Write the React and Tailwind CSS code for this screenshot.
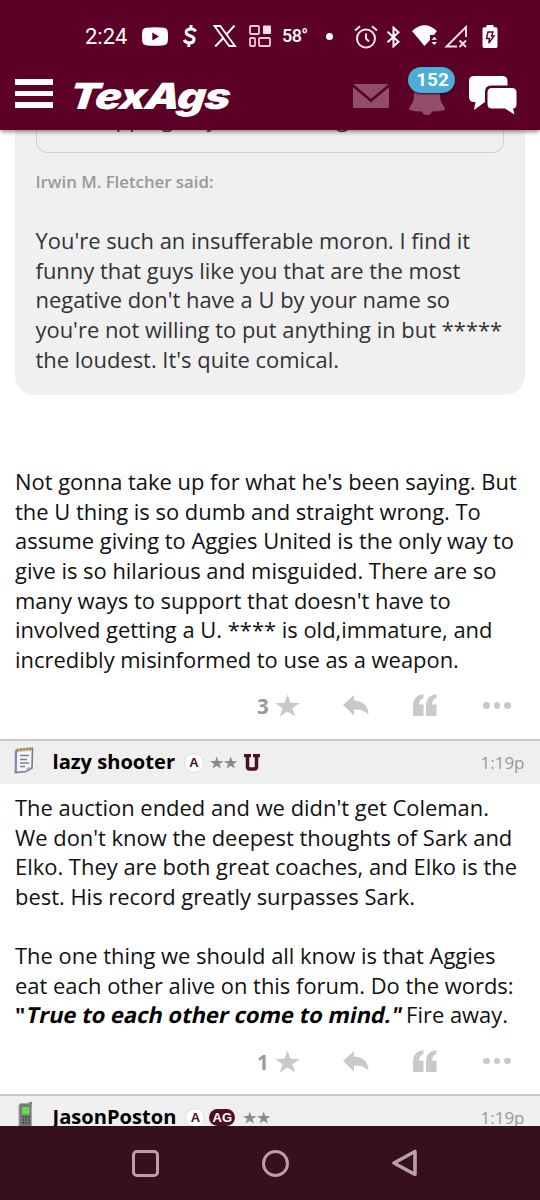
import React from "react";

const STAR =
  "M12.5 0 L15.4 8.2 L25 8.5 L17.4 13.7 L20.2 22 L12.5 17 L4.8 22 L7.6 13.7 L0 8.5 L9.6 8.2 Z";

function StatusBar() {
  return (
    <div className="flex h-[72px] w-full items-center pl-[85px] text-white">
      <span className="w-[57px] pt-[2px] font-[Roboto] text-[22px] leading-6">2:24</span>
      <svg className="h-[19px] w-[26px]" viewBox="0 0 26 19">
        <path fill="#fff" fillRule="evenodd" d="M4 .8Q13-.4 22 .8 25.4 1.2 25.7 4.5 26.3 9.5 25.7 14.500 25.400 17.800 22 18.200 13 19.200 4 18.200.6 17.800.3 14.500-.3 9.500.3 4.500.6 1.200 4 .8ZM10.300 5.500V13.500L17 9.500Z" />
      </svg>
      <svg className="ml-[15px] h-[22px] w-[14px]" viewBox="0 0 14 22" fill="none" stroke="#fff" strokeWidth="3">
        <path d="M12.500 6.500Q11.800 4 8 4 3.300 4 3.100 7.200 3 9.500 7 10.700 11.300 12 11 14.500 10.700 18 6.500 17.800 2.500 17.700 1.200 15M8.200 0 7.600 4M6.200 17.500 5.600 22" />
      </svg>
      <svg className="ml-[16px] h-[22px] w-[24px]" viewBox="0 0 24 22">
        <path d="M1.500 1H7.300L22 21H16.200Z" fill="none" stroke="#fff" strokeWidth="1.800" />
        <path d="M21.500.5 13.300 9.700M10.300 13 2.200 21.500" stroke="#fff" strokeWidth="2" />
      </svg>
      <svg className="ml-[12px] h-[22px] w-[22px]" viewBox="0 0 22 22" fill="none" stroke="#edc9d5" strokeWidth="1.800">
        <rect x="1" y="1" width="9" height="8" rx="1" />
        <rect x="14" y="0.500" width="8" height="8.500" rx="1" fill="#f6dfe7" stroke="none" />
        <rect x="1" y="13" width="5" height="8" rx="1" />
        <rect x="10" y="13" width="11" height="8" rx="1" />
      </svg>
      <span className="ml-[11px] w-[44px] font-[Roboto] text-[18px] font-medium leading-5 tracking-[-0.6px]">58°</span>
      <span className="size-[7px] rounded-full bg-white" />
      <svg className="ml-[21px] mt-px h-[24px] w-[24px]" viewBox="0 0 24 24" fill="none" stroke="#f5e6eb" strokeWidth="2">
        <circle cx="12" cy="13.500" r="9" />
        <path d="M1 5.500 6 1.200M23 5.500 18 1.200M12 8.500V13.500L15 16.500" />
      </svg>
      <svg className="ml-[8px] mt-px h-[22px] w-[15px]" viewBox="0 0 15 22" fill="none" stroke="#fff" strokeWidth="2">
        <path d="M1.500 5.800 12.500 15.800 7.500 20.300V1.700L12.500 6.200 1.500 16.200" />
      </svg>
      <svg className="ml-[11px] h-[22px] w-[27px]" viewBox="0 0 27 22" fill="#fff">
        <path d="M0 6Q12.500-5.500 25 6L22 10H18V15L12.500 21Z" />
        <path d="M19.500 14.800 22.300 11.800 25 14.800ZM19.500 17 22.300 20 25 17Z" />
      </svg>
      <svg className="ml-[5px] h-[23px] w-[24px]" viewBox="0 0 24 23" fill="none" stroke="#f5e3e9" strokeWidth="1.900">
        <path d="M22 12V2L2.500 21.500H13M15.500 15.500 22 22M22 15.500 15.500 22" />
      </svg>
      <svg className="ml-[14px] h-[23px] w-[16px]" viewBox="0 0 16 23">
        <path fill="#fff" d="M4.500 0H11.500V2.300H14Q15.500 2.300 15.500 4V21Q15.500 23 14 23H2Q.5 23 .5 21V4Q.5 2.300 2 2.300H4.500Z" />
        <path d="M6 7H11L9.500 11H12L6.800 18 7.500 13.500H4.500Z" fill="none" stroke="#5c0025" strokeWidth="1.400" />
      </svg>
    </div>
  );
}

function SiteHeader() {
  return (
    <div className="flex h-[58px] items-start text-white">
      <div className="ml-[15px] mt-[7px] flex w-[38px] flex-col gap-[6px]">
        <span className="h-[5.500px] bg-white" />
        <span className="h-[5.500px] bg-white" />
        <span className="h-[5.500px] bg-white" />
      </div>
      <div className="ml-[17px] h-[48px] w-[281px]">
        <span className="inline-block origin-left -skew-x-6 scale-x-[1.225] font-[Inter] text-[36px] font-black italic leading-[48px] tracking-[-1px]">
          TexAgs
        </span>
      </div>
      <svg className="ml-[2px] mt-[12px] h-[24px] w-[36px]" viewBox="0 0 36 24">
        <rect width="36" height="24" rx="1.500" fill="#904e6b" />
        <path d="M0 1.500 18 16.500 36 1.500" fill="none" stroke="#5c0025" strokeWidth="2.500" />
      </svg>
      <div className="relative ml-[20px] mt-[8px] h-[35px] w-[36px]">
        <svg className="h-[35px] w-[36px]" viewBox="0 0 36 35" fill="#904e6b">
          <path d="M18 0Q31 1 31 14 31 22 34 25 36 27 36 30 30 31.500 23 31.500 22 35 18 35 14 35 13 31.500 6 31.500 0 30 0 27 2 25 5 22 5 14 5 1 18 0Z" />
        </svg>
        <span className="absolute -top-[13px] -left-px flex h-[26px] w-[47px] items-center justify-center rounded-full bg-[#4baed5] pl-[2px] font-[Roboto] text-[19px] font-bold shadow-[0_1px_2px_#30001a]">
          152
        </span>
      </div>
      <svg className="ml-[24px] mt-[4px] h-[39px] w-[48px]" viewBox="0 0 48 39" fill="#fff">
        <path d="M5 0H33Q38.500 0 38.500 5V9.500H22Q16 9.500 16 16V26L5 34 6.500 26H5Q0 26 0 21V5Q0 0 5 0Z" />
        <path d="M23 12H43Q47.500 12 47.500 16.500V28Q47.500 32.500 44 32.500L45.500 38.500 36 32.500H23Q18.500 32.500 18.500 28V16.500Q18.500 12 23 12Z" />
      </svg>
    </div>
  );
}

function Actions({ count }) {
  return (
    <div className="flex h-6 items-center pl-[257px] text-[#c9c9c9]">
      <span className="w-[18px] pt-[2px] text-[20.500px] font-bold leading-6 text-[#999]">{count}</span>
      <svg className="h-[23px] w-[25px]" viewBox="0 0 25 22" fill="currentColor">
        <path d={STAR} />
      </svg>
      <svg className="ml-[43px] h-[21px] w-[26px]" viewBox="0 0 26 21" fill="currentColor">
        <path d="M0 10 11 0V5.500Q25 6.500 25.500 19.500 20 14 11 14.500V20.500Z" />
      </svg>
      <svg className="ml-[44px] h-[22px] w-[25px]" viewBox="0 0 25 22" fill="currentColor">
        <path d="M10.500 0V4Q6 5.500 6 10.500H10.500V22H0V10.500Q0 1.500 10.500 0Z" />
        <path d="M23.500 0V4Q19 5.500 19 10.500H23.500V22H13V10.500Q13 1.500 23.500 0Z" />
      </svg>
      <span className="ml-[45px] flex gap-[4px]">
        <i className="size-[6.500px] rounded-full bg-[#c9c9c9]" />
        <i className="size-[6.500px] rounded-full bg-[#c9c9c9]" />
        <i className="size-[6.500px] rounded-full bg-[#c9c9c9]" />
      </span>
    </div>
  );
}

function NotepadIcon() {
  return (
    <svg className="h-[27px] w-[21px]" viewBox="0 0 21 27">
      <path d="M2.500 3 18.500 1.500 18 21 12 24.500 1.500 25.500Z" fill="#f3f6fa" stroke="#77788c" strokeWidth="1.600" />
      <path d="M1.800 3.500V24.500" stroke="#8b84c4" strokeWidth="2.200" />
      <path d="M3 3.300 18 2" stroke="#b79d4b" strokeWidth="3.500" strokeDasharray="2 1" />
      <path d="M6 8.500H15M6 12.500H13M6 16H15M6 19.500H11" stroke="#7b8188" strokeWidth="1.300" />
      <path d="M12 24.500 13 20.500 18 20.500Z" fill="#a5adb6" />
    </svg>
  );
}

function PhoneIcon() {
  return (
    <svg className="ml-[3px] h-[27px] w-[21px]" viewBox="0 0 21 27">
      <rect x="11.500" y="0" width="3.500" height="7" rx="1" fill="#707070" />
      <rect x="2" y="1.500" width="12.500" height="25" rx="2.500" fill="#777" stroke="#a6a6a6" />
      <rect x="5" y="5" width="7.500" height="7.500" fill="#62db55" />
      <path d="M5 15H13M5 18H13M5 21H13" stroke="#454545" strokeWidth="1.500" strokeDasharray="2 1" />
    </svg>
  );
}

function PostHeader({ icon, name, ag, united }) {
  return (
    <div className="flex h-[45px] items-center border-t-2 border-[#c8c8c8] bg-[#efefef] pl-[14px] pr-[15.500px]">
      <div className="-mt-[5px] w-[38.500px]">{icon}</div>
      <span className="whitespace-nowrap text-[20.100px] font-bold text-black">{name}</span>
      <span className="ml-[9px] flex size-[20px] items-center justify-center rounded-full border border-[#ddd] bg-white font-['Liberation_Sans'] text-[13px] font-bold leading-none text-[#500f20]">
        A
      </span>
      {ag && (
        <span className="ml-[4px] flex h-[17px] w-[26px] items-center justify-center rounded-full bg-[#500f20] font-['Liberation_Sans'] text-[13px] font-bold leading-none text-white">
          AG
        </span>
      )}
      <span className={ag ? "ml-[8px] flex" : "ml-[6px] flex"}>
        {[0, 1].map((i) => (
          <svg key={i} className="h-[13px] w-[13.500px]" viewBox="0 0 25 22" fill="#8a8a8a">
            <path d={STAR} />
          </svg>
        ))}
      </span>
      {united && (
        <svg className="ml-[7px] h-[17px] w-[16px]" viewBox="0 0 16 17">
          <path d="M0 1.500H7M9 1.500H16M3.500 1.500V12.500Q3.500 15 6 15H10Q12.500 15 12.500 12.500V1.500" fill="none" stroke="#500f20" strokeWidth="3.500" />
        </svg>
      )}
      <span className="ml-auto text-[17px] text-[#999]">1:19p</span>
    </div>
  );
}

function Lines({ lines }) {
  return lines.map((line, i) => (
    <span key={i} className="block h-[29.650px] whitespace-nowrap">
      {line}
    </span>
  ));
}

function NavBar() {
  return (
    <nav className="z-10 flex h-[74px] w-full shrink-0 items-center bg-[#36101a] pl-[132px]">
      <span className="size-[27px] rounded-[5px] border-[3.500px] border-[#b7a0a6]" />
      <span className="ml-[102.500px] size-[27px] rounded-full border-[3.500px] border-[#b7a0a6]" />
      <svg className="ml-[102.500px] h-[28px] w-[27px]" viewBox="0 0 27 28">
        <path d="M3 14 24 2.500V25.500Z" fill="none" stroke="#b7a0a6" strokeWidth="3.600" strokeLinejoin="round" />
      </svg>
    </nav>
  );
}

export default function App() {
  return (
    <div className="flex h-[1200px] w-[540px] flex-col overflow-hidden bg-white font-['Open_Sans',sans-serif]">
      <header className="z-10 h-[130px] shrink-0 bg-[#5c0025] shadow-[0_3px_4px_-1px_rgba(70,20,40,0.5)]">
        <StatusBar />
        <SiteHeader />
      </header>

      <main className="h-[996px] shrink-0 overflow-hidden">
        <article className="h-[609px]">
          <blockquote className="mx-[15px] h-[265px] rounded-b-[20px] bg-[#f0f0f0] pl-[20.500px] pr-[21px] text-[#333]">
            <div className="flex h-[23px] items-start rounded-b-[12px] border border-t-0 border-[#d0d0d0]">
              <p className="-mt-[26px] flex h-[30px] pl-[79px] text-[21.930px] leading-[30px]">
                <span className="w-[91px]">pping</span>
                <span className="w-[130px]">y</span>
                <span>g</span>
              </p>
            </div>
            <p className="pt-[17px] text-[16.800px] font-semibold leading-6 text-[#999]">Irwin M. Fletcher said:</p>
            <div className="pt-[32px] text-[21.930px] leading-[29.650px]">
              <Lines
                lines={[
                  "You're such an insufferable moron. I find it",
                  "funny that guys like you that are the most",
                  "negative don't have a U by your name so",
                  "you're not willing to put anything in but *****",
                  "the loudest. It's quite comical.",
                ]}
              />
            </div>
          </blockquote>
          <div className="px-[15px] pt-[72px] text-[21.930px] leading-[29.650px] text-[#111]">
            <Lines
              lines={[
                "Not gonna take up for what he's been saying. But",
                "the U thing is so dumb and straight wrong. To",
                "assume giving to Aggies United is the only way to",
                "give is so hilarious and misguided. There are so",
                "many ways to support that doesn't have to",
                "involved getting a U. **** is old,immature, and",
                "incredibly misinformed to use as a weapon.",
              ]}
            />
          </div>
          <div className="mt-[19px]">
            <Actions count="3" />
          </div>
        </article>

        <article className="h-[355px]">
          <PostHeader icon={<NotepadIcon />} name="lazy shooter" united />
          <div className="h-[237px] px-[15px] pt-[9px] text-[21.930px] leading-[29.650px] text-[#111]">
            <Lines
              lines={[
                "The auction ended and we didn't get Coleman.",
                "We don't know the deepest thoughts of Sark and",
                "Elko. They are both great coaches, and Elko is the",
                "best. His record greatly surpasses Sark.",
                "",
                "The one thing we should all know is that Aggies",
                "eat each other alive on this forum. Do the words:",
                <>
                  <b>"</b>
                  <b className="ml-[2px] mr-[-2px] inline-block -skew-x-12 text-black">True to each other come to mind."</b> Fire away.
                </>,
              ]}
            />
          </div>
          <div className="mt-[28px]">
            <Actions count="1" />
          </div>
        </article>

        <PostHeader icon={<PhoneIcon />} name="JasonPoston" ag />
      </main>
      <NavBar />
    </div>
  );
}
